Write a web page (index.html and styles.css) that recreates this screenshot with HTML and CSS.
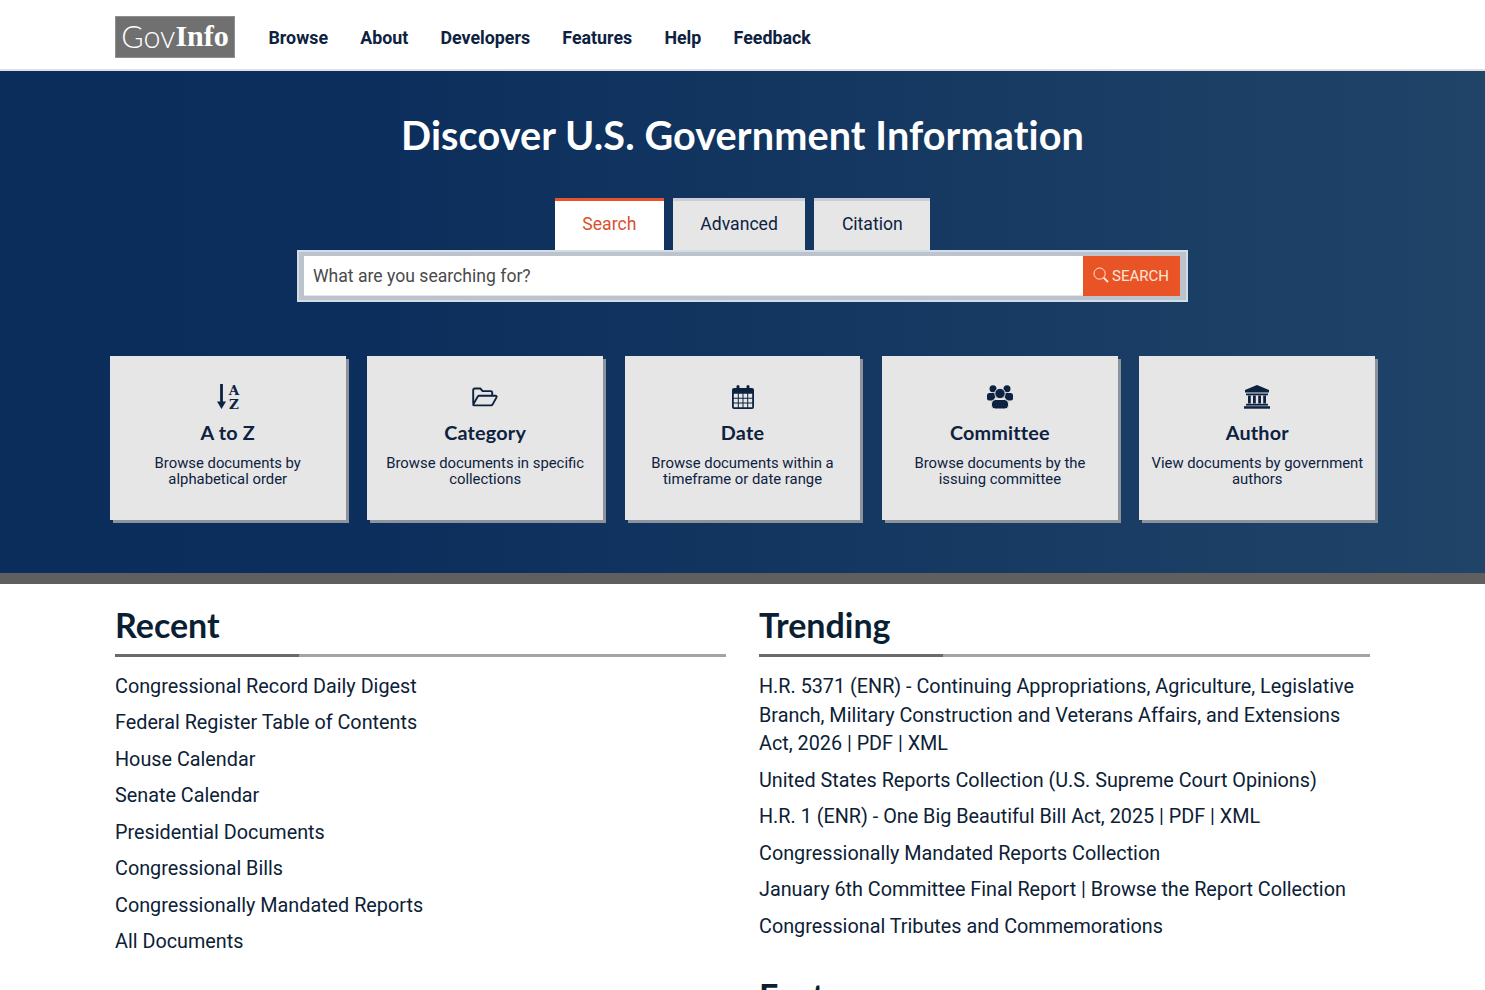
FILE: index.html
```html
<!DOCTYPE html>
<html lang="en">
<head>
<meta charset="utf-8">
<title>GovInfo</title>
<link rel="stylesheet" href="styles.css">
</head>
<body>
<header class="site-header">
  <div class="container header-row">
    <a class="logo" href="#"><span class="logo-gov">Gov</span><span class="logo-info">Info</span></a>
    <nav class="main-nav">
      <a href="#">Browse</a><a href="#">About</a><a href="#">Developers</a><a href="#">Features</a><a href="#">Help</a><a href="#">Feedback</a>
    </nav>
  </div>
</header>
<section class="hero">
  <h1 class="hero-title">Discover U.S. Government Information</h1>
  <div class="tabs">
    <a class="tab tab-active" href="#">Search</a>
    <a class="tab" href="#">Advanced</a>
    <a class="tab" href="#">Citation</a>
  </div>
  <form class="search-box">
    <div class="search-input">What are you searching for?</div>
    <button class="search-btn" type="button">
      <svg class="search-icon" viewBox="0 0 16 16" width="16" height="16" fill="none" stroke="currentColor"><circle cx="6.6" cy="6.6" r="5.6" stroke-width="1"/><path d="M10.6 10.6L15 15" stroke-width="2"/></svg>
      <span>SEARCH</span>
    </button>
  </form>
  <div class="cards">
    <a class="card" href="#">
      <div class="card-icon">
        <svg class="az-icon" viewBox="0 0 24 26" width="24" height="26"><path d="M5.500 0v20" stroke="#0d2240" stroke-width="2.800" fill="none"/><path d="M1 17.500h9L5.500 25z" fill="#0d2240"/><text class="az" x="18" y="11" text-anchor="middle">A</text><text class="az" x="18" y="24.500" text-anchor="middle">Z</text></svg>
      </div>
      <h3>A to Z</h3>
      <p>Browse documents by alphabetical order</p>
    </a>
    <a class="card" href="#">
      <div class="card-icon">
        <svg viewBox="0 0 26 20" width="26" height="20" fill="none" stroke="#0d2240" stroke-width="1.900" stroke-linejoin="round"><path d="M1.200 16.500V3a1.500 1.500 0 0 1 1.500-1.500h5.600l2.400 2.600h8a1.500 1.500 0 0 1 1.500 1.500v2.500"/><path d="M1.200 17.500c0 .6.500.9 1 .9h17c.6 0 1-.3 1.300-.8l4-7.200c.4-.8-.1-1.600-1-1.600H7.200c-.6 0-1.100.3-1.400.8z"/></svg>
      </div>
      <h3>Category</h3>
      <p>Browse documents in specific collections</p>
    </a>
    <a class="card" href="#">
      <div class="card-icon">
        <svg viewBox="0 0 22 24" width="22" height="24"><path fill="#0d2240" fill-rule="evenodd" d="M2 3h2.500V1.500a1.500 1.500 0 0 1 3 0V3h7V1.500a1.500 1.500 0 0 1 3 0V3H20a2 2 0 0 1 2 2v17a2 2 0 0 1-2 2H2a2 2 0 0 1-2-2V5a2 2 0 0 1 2-2zM1.800 8.800v4h4v-4zM6.800 8.800v4h3.700v-4zM11.500 8.800v4h3.700v-4zM16.200 8.800v4h4v-4zM1.800 13.800v3.600h4v-3.600zM6.800 13.800v3.600h3.700v-3.600zM11.500 13.800v3.600h3.700v-3.600zM16.200 13.800v3.600h4v-3.600zM1.800 18.400v3.800h4v-3.800zM6.800 18.400v3.800h3.700v-3.800zM11.500 18.400v3.800h3.700v-3.800zM16.200 18.400v3.800h4v-3.800z"/></svg>
      </div>
      <h3>Date</h3>
      <p>Browse documents within a timeframe or date range</p>
    </a>
    <a class="card" href="#">
      <div class="card-icon">
        <svg class="users-icon" viewBox="0 0 26 24" width="26" height="24" fill="#0d2240"><circle cx="6" cy="3.800" r="3.500"/><circle cx="20" cy="3.800" r="3.500"/><path d="M2.500 8h6v4l-2.500 3.500H2a2 2 0 0 1-2-2v-3A2.500 2.500 0 0 1 2.500 8zM17.500 8h6a2.500 2.500 0 0 1 2.500 2.500v3a2 2 0 0 1-2 2h-4l-2.500-3.500z"/><circle cx="13" cy="8.500" r="5.200" stroke="#e6e6e6" stroke-width="1"/><path d="M8.500 14.500h9a4 4 0 0 1 4 4v2a3.500 3.500 0 0 1-3.500 3.500H8a3.500 3.500 0 0 1-3.500-3.500v-2a4 4 0 0 1 4-4z" stroke="#e6e6e6" stroke-width="1"/></svg>
      </div>
      <h3>Committee</h3>
      <p>Browse documents by the issuing committee</p>
    </a>
    <a class="card" href="#">
      <div class="card-icon">
        <svg viewBox="0 0 26 24" width="26" height="24" fill="#0d2240"><path d="M13 0l12 5v2.500H1V5z"/><rect x="2" y="8.500" width="22" height="1.800"/><rect x="4" y="10.500" width="2.800" height="8"/><rect x="9" y="10.500" width="2.800" height="8"/><rect x="14.200" y="10.500" width="2.800" height="8"/><rect x="19.200" y="10.500" width="2.800" height="8"/><rect x="2" y="18.800" width="22" height="1.800"/><rect x="0" y="21.200" width="26" height="2.500"/></svg>
      </div>
      <h3>Author</h3>
      <p>View documents by government authors</p>
    </a>
  </div>
</section>
<div class="hero-bar"></div>
<main class="container columns">
  <section class="col">
    <h2 class="col-title">Recent</h2>
    <ul class="links">
      <li><a href="#">Congressional Record Daily Digest</a></li>
      <li><a href="#">Federal Register Table of Contents</a></li>
      <li><a href="#">House Calendar</a></li>
      <li><a href="#">Senate Calendar</a></li>
      <li><a href="#">Presidential Documents</a></li>
      <li><a href="#">Congressional Bills</a></li>
      <li><a href="#">Congressionally Mandated Reports</a></li>
      <li><a href="#">All Documents</a></li>
    </ul>
  </section>
  <section class="col">
    <h2 class="col-title">Trending</h2>
    <ul class="links">
      <li><a href="#">H.R. 5371 (ENR) - Continuing Appropriations, Agriculture, Legislative Branch, Military Construction and Veterans Affairs, and Extensions Act, 2026 | PDF | XML</a></li>
      <li><a href="#">United States Reports Collection (U.S. Supreme Court Opinions)</a></li>
      <li><a href="#">H.R. 1 (ENR) - One Big Beautiful Bill Act, 2025 | PDF | XML</a></li>
      <li><a href="#">Congressionally Mandated Reports Collection</a></li>
      <li><a href="#">January 6th Committee Final Report | Browse the Report Collection</a></li>
      <li><a href="#">Congressional Tributes and Commemorations</a></li>
    </ul>
    <h2 class="col-title col-title-next">Features</h2>
  </section>
</main>
</body>
</html>
```
FILE: styles.css
```css
* { box-sizing: border-box; }
html, body { margin: 0; padding: 0; height: 990px; overflow: hidden; background: #fff; }
body { font-family: Roboto, "Liberation Sans", sans-serif; color: #0c2136; }
a { color: inherit; text-decoration: none; }
.container { width: 1255px; margin: 0 auto; }
.site-header { height: 71px; background: #fff; border-bottom: 2px solid #dfe1e5; }
.header-row { display: flex; align-items: flex-start; padding-top: 16px; }
.logo { width: 120px; height: 42px; padding-bottom: 2px; background: #707070; border: 1px solid #8f8f8f; display: flex; align-items: center; justify-content: center; color: #fff; font-size: 30px; line-height: 38px; }
.logo-gov { font-family: Lato, sans-serif; font-weight: 300; font-size: 30.500px; }
.logo-info { font-family: "Liberation Serif", serif; font-weight: 700; }
.main-nav { display: flex; gap: 32.200px; margin-left: 33.500px; padding-top: 9px; font-size: 17.820px; line-height: 25px; font-weight: 700; color: #0d2240; }
.hero { height: 502px; background: linear-gradient(to right, #0a2d5c, #0b2e5c 25%, #204468); display: flex; flex-direction: column; align-items: center; }
.hero-title { margin: 36.500px 0 37.500px; font-family: Lato, sans-serif; font-weight: 700; font-size: 39.600px; line-height: 53px; letter-spacing: .11px; color: #fff; font-variant-ligatures: none; }
.tabs { display: flex; gap: 9px; height: 52px; }
.tab { height: 52px; padding: 11px 27.500px 0; background: #e6e6e6; border-top: 3px solid #c9ced6; font-size: 17.600px; line-height: 24px; color: #0d2240; }
.tab-active { background: #fff; border-top-color: #e9532b; color: #d9502d; }
.search-box { width: 891px; height: 52px; display: flex; padding: 4px 6px 4px 5px; background: #bcc3cc; border: 2px solid #d3dde8; }
.search-input { width: 779px; height: 40px; background: #fff; border-bottom: 1px solid #e3e6ee; padding: 0 9px; font-size: 17.600px; line-height: 40px; color: #4a4a4a; }
.search-btn { flex: 1; height: 40px; margin: 0; padding: 0 1px 0 0; border: 0; background: #e95427; color: #ffe6d9; display: flex; align-items: center; justify-content: center; gap: 3px; font-family: Roboto, sans-serif; font-size: 15px; }
.search-icon { margin-top: -2px; }
.cards { display: grid; grid-template-columns: repeat(5, 235.600px); column-gap: 21.800px; margin: 54px 0 0; }
.card { height: 164px; background: #e6e6e6; box-shadow: 3px 3px 0 #8d939b; padding: 27px 10px 0; text-align: center; color: #0d2240; }
.card-icon { height: 27px; display: flex; align-items: center; justify-content: center; }
.az-icon { overflow: visible; }
.users-icon { margin-top: 1px; }
.az { font-family: "DejaVu Serif", serif; font-weight: 700; font-size: 13.500px; fill: #0d2240; }
.card h3 { margin: 7px 0 8px; font-family: Lato, sans-serif; font-weight: 700; font-size: 19.800px; line-height: 30px; letter-spacing: .2px; font-variant-ligatures: none; }
.card p { margin: 0; font-size: 14.850px; line-height: 16px; }
.hero-bar { height: 11px; background: #5f5f5f; }
.columns { display: grid; grid-template-columns: 611px 611px; column-gap: 33px; }
.col-title { margin: 17px 0 0; height: 56px; font-family: Lato, sans-serif; font-weight: 700; font-size: 34px; line-height: 48px; color: #0a1f33; font-variant-ligatures: none; background: linear-gradient(to right, #6a6a6a 184px, #a3a3a3 184px) bottom / 100% 3px no-repeat; }
.col-title-next { margin-top: 31px; background: none; }
.links { list-style: none; margin: 16px 0 0; padding: 0; font-size: 19.800px; line-height: 28.710px; }
.links li { margin-bottom: 7.720px; }
```
